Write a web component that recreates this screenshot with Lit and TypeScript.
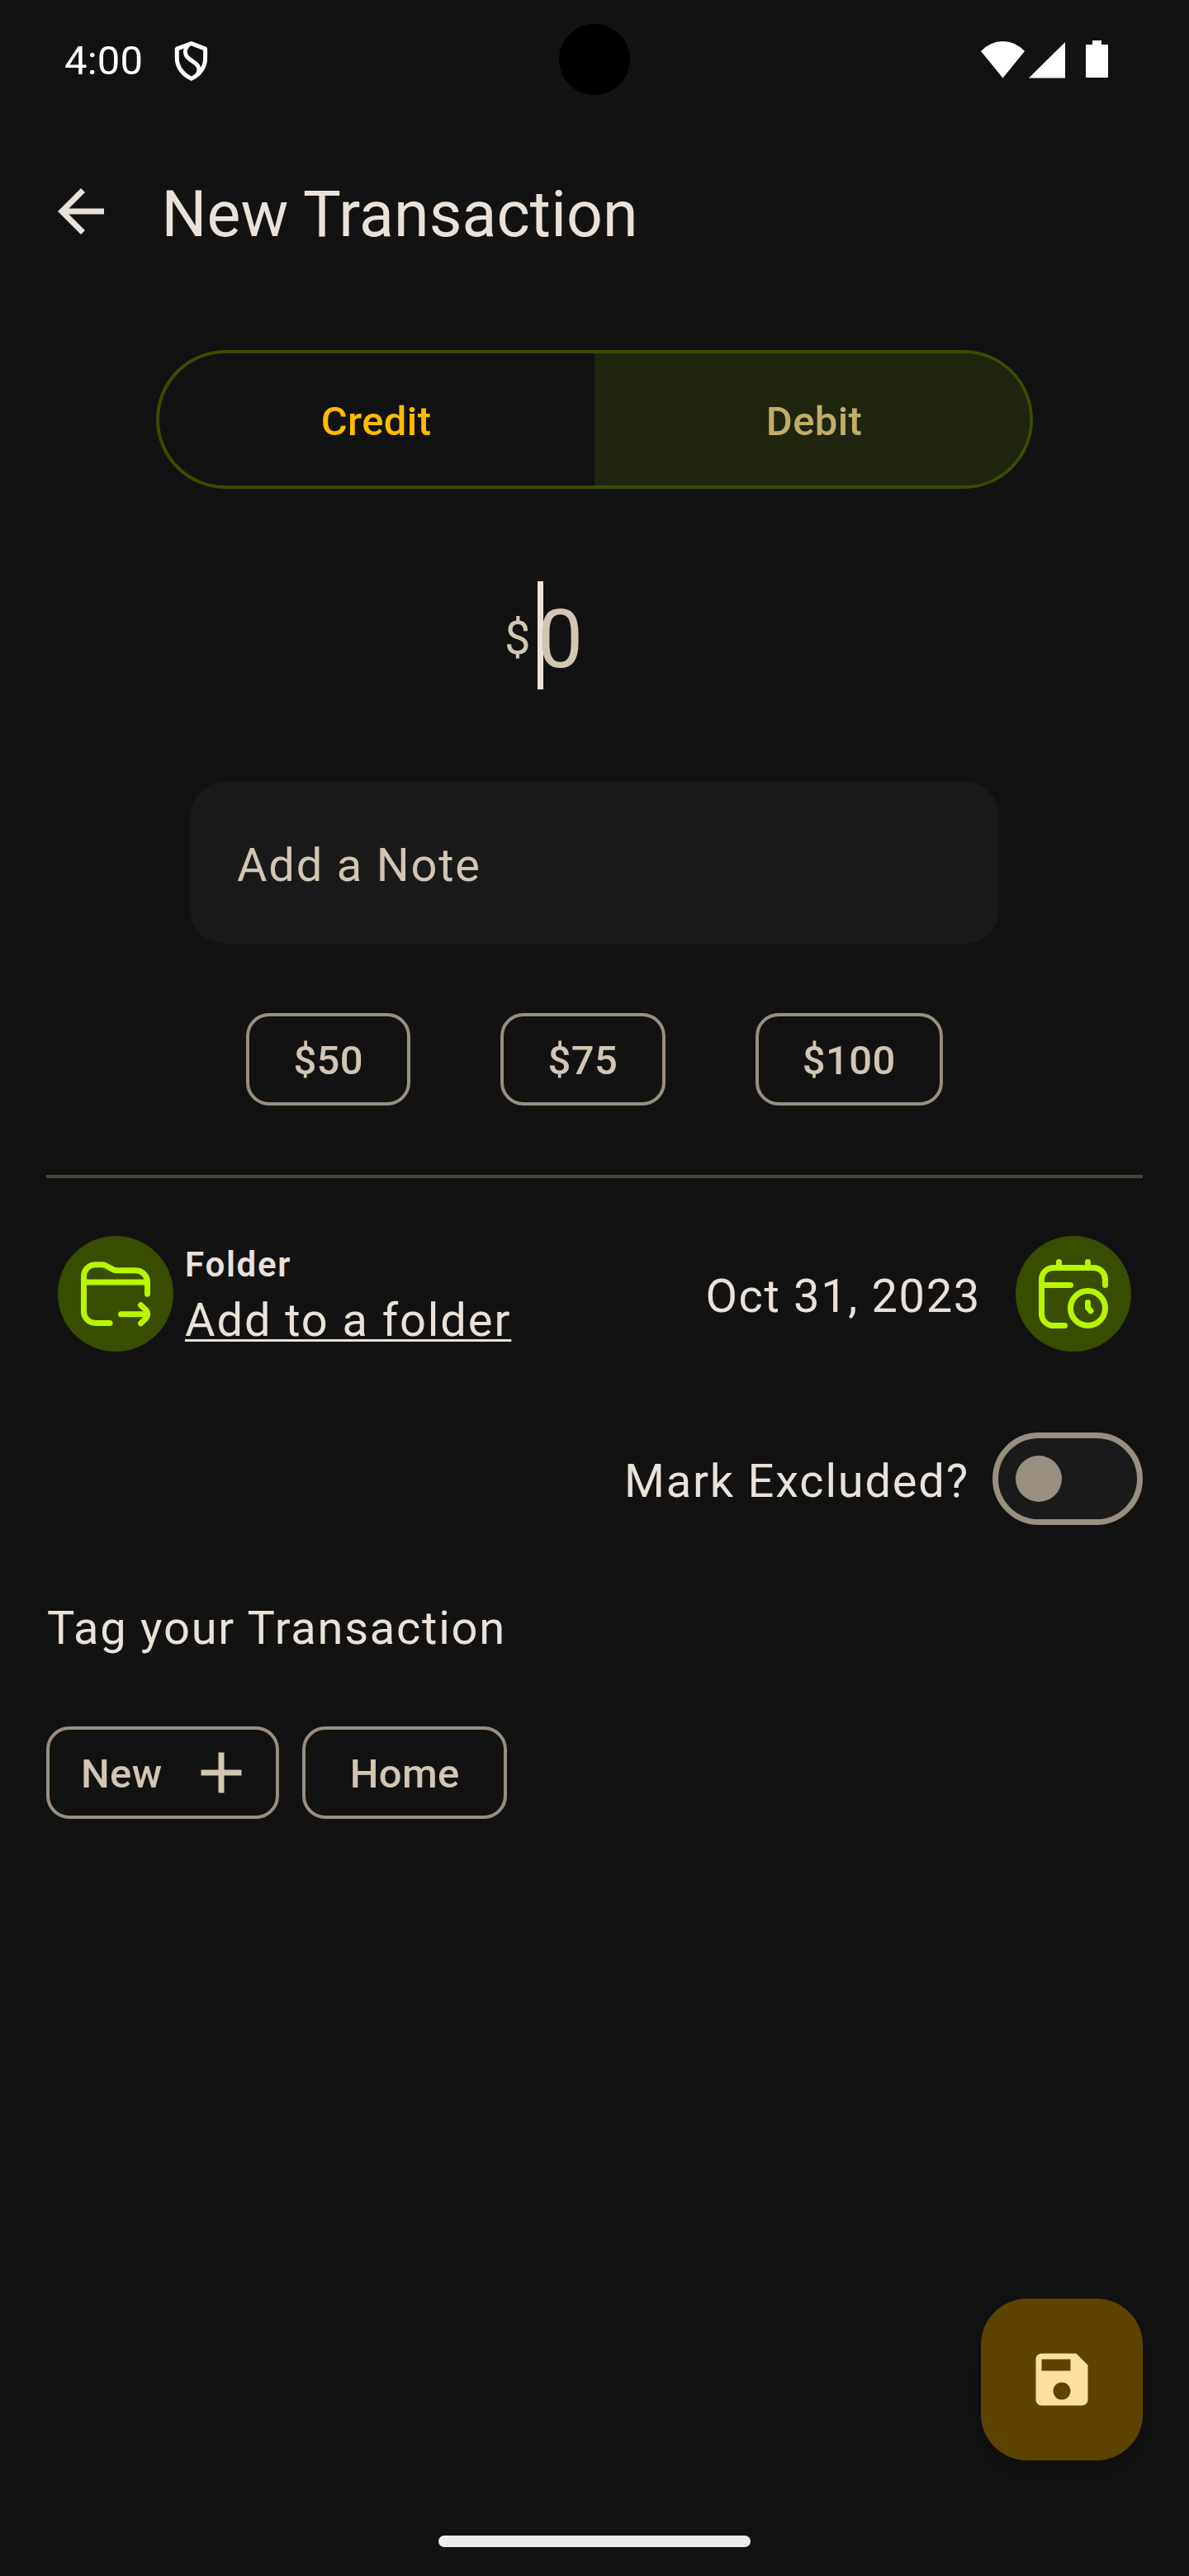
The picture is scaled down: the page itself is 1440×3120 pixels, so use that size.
import { LitElement, html, css, svg } from "lit";
import { customElement, property, state } from "lit/decorators.js";

@customElement("outline-chip")
class OutlineChip extends LitElement {
  @property() label = "";
  @property({ type: Boolean }) add = false;

  static styles = css`
    :host { display: block; }
    .chip {
      box-sizing: border-box;
      height: 112px;
      padding: 0 53.3px;
      border: 4px solid #998f80;
      border-radius: 28px;
      display: flex;
      align-items: center;
      color: #d2c5b4;
      font: 500 49px/60px Roboto, sans-serif;
      letter-spacing: 0.35px;
    }
    .chip.with-icon { padding: 0 24px 0 38px; gap: 34px; }
    .label { padding-top: 4px; }
    .plus { display: block; width: 84px; height: 84px; margin-left: -4px; }
  `;

  render() {
    return html`<div class="chip ${this.add ? "with-icon" : ""}">
      <span class="label">${this.label}</span>
      ${this.add
        ? html`<svg class="plus" viewBox="0 0 24 24" fill="#d2c5b4"><path d="M19 13h-6v6h-2v-6H5v-2h6V5h2v6h6z" /></svg>`
        : ""}
    </div>`;
  }
}

@customElement("status-bar")
class StatusBar extends LitElement {
  static styles = css`
    :host { display: block; }
    .bar {
      position: relative;
      box-sizing: border-box;
      height: 148px;
      padding: 0 98px 0 78px;
      display: flex;
      align-items: center;
      color: #fff;
    }
    .time { font: 400 49px/60px Roboto, sans-serif; letter-spacing: 0.2px; }
    .shield { margin-left: 37px; width: 44px; height: 54px; }
    .signals { margin-left: auto; width: 154px; height: 48px; margin-top: -5px; }
    .camera {
      position: absolute;
      left: 677px;
      top: 29px;
      width: 86px;
      height: 86px;
      border-radius: 50%;
      background: #000;
    }
  `;

  render() {
    return html`<div class="bar">
      <span class="time">4:00</span>
      <svg class="shield" viewBox="0 0 44 54" fill="none" stroke="#fff" stroke-width="5" stroke-linejoin="round">
        <path d="M21.7 5.7 38.6 12.2V24C38.6 34 32 43.5 21.7 48.2 11.4 43.5 4.3 34 4.3 24V12.2Z" />
        <path d="M18 7.5C14.5 11 13.6 16 15.2 19.5 17.5 25.5 27 27.5 30.3 34 31.5 37 31 40 29 43" />
      </svg>
      <svg class="signals" viewBox="0 0 154 48" fill="#fff">
        <path d="M0 14A35.3 35.3 0 0 1 53 14L26.5 46.5Z" />
        <path d="M58 46.5H102V3Z" />
        <path d="M135 1h11v5h7.3a.7 .7 0 0 1 .7 .7v38.6a.7 .7 0 0 1-.7 .7h-25.6a.7 .7 0 0 1-.7-.7v-38.6a.7 .7 0 0 1 .7-.7h7.3z" />
      </svg>
      <div class="camera"></div>
    </div>`;
  }
}

const folderIcon = svg`
  <path d="M35 77.5H17.5A14 14 0 0 1 3.5 63.5V20.5A14 14 0 0 1 17.5 6.7H25.5Q27.5 6.7 29.5 7.7L39 12.7Q41.5 13.8 44 13.8H66.5A14 14 0 0 1 80.5 27.8V42.3" />
  <path d="M3.5 28H80.5" />
  <path d="M48.5 66.7H80" />
  <path d="M72.5 55.7 79 62Q82 66.7 79 71.4L72.5 77.7" />`;

const calendarIcon = svg`
  <path d="M31.5 80.5H17.5A14 14 0 0 1 3.5 66.5V24.5A14 14 0 0 1 17.5 10.5H66.5A14 14 0 0 1 80.5 24.5V31.5" />
  <path d="M3.5 31.5H38.5M24.5 3.5V10.5M59.5 3.5V10.5" />
  <circle cx="59.5" cy="59.5" r="21" />
  <path d="M59.5 52.5V59L63 62.8" />`;

@customElement("app-root")
class AppRoot extends LitElement {
  @state() private amounts = ["$50", "$75", "$100"];

  static styles = css`
    :host { display: block; }
    .screen {
      box-sizing: border-box;
      width: 1440px;
      height: 3120px;
      display: flex;
      flex-direction: column;
      overflow: hidden;
      background: #121212;
      color: #eae1d9;
      font-family: Roboto, sans-serif;
    }
    .toolbar { height: 216px; padding-left: 56px; display: flex; align-items: center; }
    .back { width: 84px; height: 84px; }
    .title { margin: 7px 0 0 55.5px; font-size: 77px; line-height: 98px; font-weight: 400; letter-spacing: 0.1px; }
    .segments {
      box-sizing: border-box;
      width: 1062px;
      height: 168px;
      margin: 60px auto 0;
      border: 4px solid #384d00;
      border-radius: 84px;
      display: flex;
      overflow: hidden;
      font-size: 49px;
      font-weight: 500;
      letter-spacing: 0.35px;
    }
    .segment { box-sizing: border-box; width: 50%; display: flex; align-items: center; justify-content: center; padding-top: 4px; }
    .credit { color: #ffbb00; padding-right: 2px; }
    .debit { color: #bfae6a; background: #20250f; padding-left: 5px; }
    .amount { margin-top: 112px; padding-left: 611px; height: 131px; display: flex; color: #d2c5b4; }
    .currency { width: 40px; font-size: 56px; line-height: 138px; }
    .digits {
      font-size: 98px;
      line-height: 141px;
      height: 131px;
      background: linear-gradient(#eae1d9, #eae1d9) 0 0 / 7px 131px no-repeat;
    }
    .note {
      box-sizing: border-box;
      width: 980px;
      height: 196px;
      margin: 112px auto 0;
      padding: 6px 57px 0;
      border-radius: 42px;
      background: #1a1a1a;
      display: flex;
      align-items: center;
      color: #d2c5b4;
    }
    .body { font-size: 56px; line-height: 84px; letter-spacing: 1.8px; }
    .presets { margin-top: 84px; display: flex; justify-content: center; gap: 109px; }
    .divider { margin: 84px 56px 0; height: 4px; background: #4f4639; flex: none; }
    .details { margin: 70px 70px 0; height: 140px; display: flex; align-items: center; }
    .badge {
      width: 140px;
      height: 140px;
      border-radius: 50%;
      background: #384d00;
      display: flex;
      align-items: center;
      justify-content: center;
    }
    .badge-icon { width: 84px; height: 84px; fill: none; stroke: #b8f600; stroke-width: 7; stroke-linecap: round; stroke-linejoin: round; }
    .folder { margin: 0 auto 0 14px; display: flex; flex-direction: column; }
    .folder-label { font-size: 42px; line-height: 56px; font-weight: 600; letter-spacing: 1.75px; margin-top: 6px; }
    .folder-link { margin-top: 2px; line-height: 74px; letter-spacing: 1.9px; text-decoration: underline; text-decoration-thickness: 3px; text-underline-offset: 4px; text-decoration-skip-ink: none; }
    .date { margin: 5px 42px 0 0; letter-spacing: 1.65px; }
    .exclude { margin: 98px 56px 0; height: 112px; display: flex; align-items: center; justify-content: flex-end; gap: 28px; }
    .exclude-label { margin-top: 6px; }
    .switch {
      box-sizing: border-box;
      width: 182px;
      height: 112px;
      padding-left: 21px;
      border: 7px solid #998f80;
      border-radius: 56px;
      background: #1a1a1a;
      display: flex;
      align-items: center;
    }
    .thumb { width: 56px; height: 56px; border-radius: 50%; background: #998f80; }
    .tag-title { margin: 83px 57px 0; letter-spacing: 1.75px; }
    .tags { margin: 77px 56px 0; display: flex; gap: 28px; }
    .fab {
      width: 196px;
      height: 196px;
      margin: auto 56px 0 auto;
      border-radius: 56px;
      background: #5c4300;
      display: flex;
      align-items: center;
      justify-content: center;
      box-shadow: 0 14px 28px rgba(0, 0, 0, 0.2);
    }
    .save { width: 84px; height: 84px; }
    .nav { height: 140px; display: flex; justify-content: center; }
    .handle { width: 378px; height: 14px; margin-top: 91px; border-radius: 7px; background: #ececec; }
  `;

  render() {
    return html`<main class="screen">
      <status-bar></status-bar>
      <header class="toolbar">
        <svg class="back" viewBox="0 0 24 24" fill="#eae1d9">
          <path d="M20 11H7.83l5.59-5.59L12 4l-8 8 8 8 1.41-1.41L7.83 13H20v-2z" />
        </svg>
        <h1 class="title">New Transaction</h1>
      </header>
      <div class="segments">
        <div class="segment credit">Credit</div>
        <div class="segment debit">Debit</div>
      </div>
      <div class="amount"><span class="currency">$</span><span class="digits">0</span></div>
      <div class="note body">Add a Note</div>
      <div class="presets">${this.amounts.map((a) => html`<outline-chip .label=${a}></outline-chip>`)}</div>
      <div class="divider"></div>
      <section class="details">
        <div class="badge"><svg class="badge-icon" viewBox="0 0 84 84">${folderIcon}</svg></div>
        <div class="folder">
          <span class="folder-label">Folder</span>
          <span class="body folder-link">Add to a folder</span>
        </div>
        <span class="body date">Oct 31, 2023</span>
        <div class="badge"><svg class="badge-icon" viewBox="0 0 84 84">${calendarIcon}</svg></div>
      </section>
      <div class="exclude">
        <span class="body exclude-label">Mark Excluded?</span>
        <div class="switch"><div class="thumb"></div></div>
      </div>
      <div class="body tag-title">Tag your Transaction</div>
      <div class="tags">
        <outline-chip .label=${"New"} .add=${true}></outline-chip>
        <outline-chip .label=${"Home"}></outline-chip>
      </div>
      <div class="fab">
        <svg class="save" viewBox="0 0 24 24" fill="#ffdf9e">
          <path d="M17 3H5c-1.11 0-2 .9-2 2v14c0 1.1.89 2 2 2h14c1.1 0 2-.9 2-2V7l-4-4zm-5 16c-1.66 0-3-1.34-3-3s1.34-3 3-3 3 1.34 3 3-1.34 3-3 3zm3-10H5V5h10v4z" />
        </svg>
      </div>
      <footer class="nav"><div class="handle"></div></footer>
    </main>`;
  }
}
